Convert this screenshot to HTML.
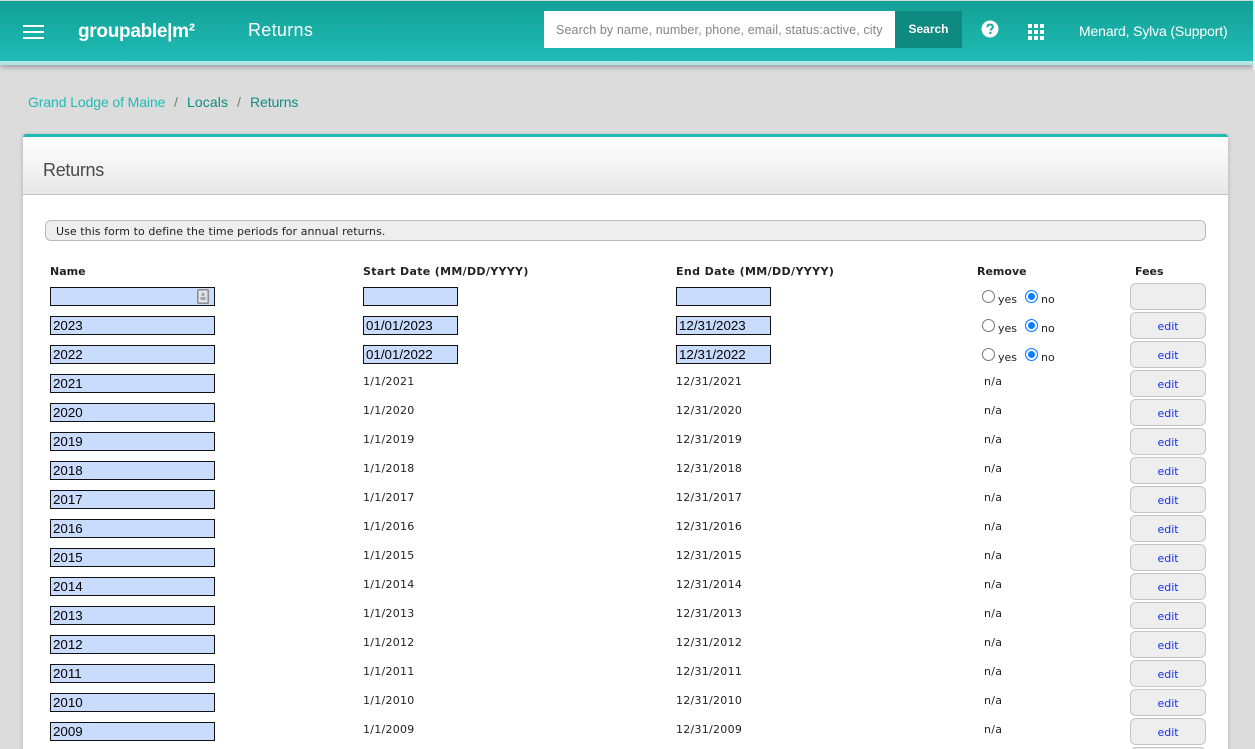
<!DOCTYPE html>
<html lang="en">
<head>
<meta charset="utf-8">
<title>Returns</title>
<style>
html,body{margin:0;padding:0;width:1255px;height:749px;overflow:hidden;background:#dcdcdc}
*{box-sizing:border-box}
body{position:relative;font-family:"DejaVu Sans",Verdana,sans-serif;font-size:11px;color:#222}
.a{position:absolute;white-space:nowrap}
.r{font-family:"Liberation Sans",Arial,sans-serif}
#top{left:0;top:0;width:1253px;height:65px;background:linear-gradient(#13a096,#1fbcb5);border-top:1px solid #cfdcdb;border-bottom:4px solid #b3e5e6;box-shadow:0 2px 5px rgba(0,0,0,.3)}
#edge{left:1253px;top:0;width:2px;height:70px;background:#efefef}
.bar{left:23px;width:21px;height:2px;background:#fff}
#card{left:23px;top:134px;width:1205px;height:640px;background:#fff;border-top:3px solid #1fbab4;border-radius:3px 3px 0 0;box-shadow:0 1px 5px rgba(0,0,0,.2)}
#head{left:23px;top:137px;width:1205px;height:58px;background:linear-gradient(#fff,#e7e7e7);border-bottom:1px solid #c4c4c4}
#note{left:45px;top:220px;width:1161px;height:21px;background:#eee;border:1px solid #bbb;border-radius:6px;padding:1px 0 0 10px;line-height:20px;letter-spacing:.06px}
.h{top:265px;font-weight:bold;font-size:11px;line-height:14px;color:#222}
.row{position:absolute;left:0;width:1255px;height:29px}
.i{position:absolute;top:4px;height:19px;background:#c9dcfd;border:1px solid #111;font:13.33px/17px "Liberation Sans",Arial,sans-serif;color:#000;padding-left:2px;overflow:hidden}
.n{left:50px;width:165px}
.s{left:363px;width:95px}
.e{left:676px;width:95px}
.d{position:absolute;top:5px;line-height:14px;font-size:11px;color:#222;letter-spacing:.27px}
.b{position:absolute;left:1130px;top:0;width:76px;height:27px;background:#eee;border:1px solid #c4c4c4;border-radius:6px;text-align:center;color:#1432e6;line-height:27px;font-size:11px}
.ro{position:absolute;width:13px;height:13px;top:7px;border:1px solid #777;border-radius:50%;background:#fff}
.ro.on{border:1px solid #0a7cff;background:#0a7cff;box-shadow:inset 0 0 0 2px #fff}
.lb{position:absolute;top:10px;line-height:14px}
</style>
</head>
<body>
<div class="a" id="top"></div>
<div class="a" id="edge"></div>
<div class="a bar" style="top:25px"></div>
<div class="a bar" style="top:31px"></div>
<div class="a bar" style="top:37px"></div>
<div class="a r" style="left:78px;top:20px;font-size:19px;line-height:24px;font-weight:bold;color:#fff;letter-spacing:-.3px">groupable|m²</div>
<div class="a r" style="left:248px;top:18px;font-size:18px;line-height:24px;color:#fff;letter-spacing:.3px">Returns</div>
<div class="a" style="left:544px;top:11px;width:351px;height:37px;background:#fff"></div>
<div class="a r" style="left:556px;top:23px;font-size:12.5px;line-height:15px;color:#858585;letter-spacing:.11px">Search by name, number, phone, email, status:active, city</div>
<div class="a r" style="left:895px;top:11px;width:67px;height:37px;background:#0e8a80;color:#fff;font-size:12px;font-weight:bold;line-height:36px;text-align:center">Search</div>
<svg class="a" style="left:981px;top:20px" width="18" height="18" viewBox="0 0 18 18"><circle cx="9" cy="9" r="8.5" fill="#fff"/><path d="M6.3 7.2C6.3 5.5 7.5 4.5 9.1 4.5c1.6 0 2.7 1 2.7 2.4 0 1.9-2.1 2-2.1 3.6" fill="none" stroke="#17a89f" stroke-width="2"/><rect x="8.3" y="11.8" width="2.2" height="2.2" fill="#17a89f"/></svg>
<svg class="a" style="left:1028px;top:24px" width="16" height="16" viewBox="0 0 16 16" fill="#fff"><rect x="0" y="0" width="4" height="4"/><rect x="6" y="0" width="4" height="4"/><rect x="12" y="0" width="4" height="4"/><rect x="0" y="6" width="4" height="4"/><rect x="6" y="6" width="4" height="4"/><rect x="12" y="6" width="4" height="4"/><rect x="0" y="12" width="4" height="4"/><rect x="6" y="12" width="4" height="4"/><rect x="12" y="12" width="4" height="4"/></svg>
<div class="a r" style="left:1079px;top:22px;font-size:14px;line-height:18px;color:#fff;letter-spacing:-.14px">Menard, Sylva (Support)</div>

<div class="a r" style="left:28px;top:93px;font-size:14px;line-height:18px;color:#1fbdb5;letter-spacing:-.1px">Grand Lodge of Maine</div>
<div class="a r" style="left:174px;top:93px;font-size:14px;line-height:18px;color:#777">/</div>
<div class="a r" style="left:187px;top:93px;font-size:14px;line-height:18px;color:#0f8c83;letter-spacing:.1px">Locals</div>
<div class="a r" style="left:237px;top:93px;font-size:14px;line-height:18px;color:#777">/</div>
<div class="a r" style="left:250px;top:93px;font-size:14px;line-height:18px;color:#0f8c83;letter-spacing:-.1px">Returns</div>

<div class="a" id="card"></div>
<div class="a" id="head"></div>
<div class="a r" style="left:43px;top:159px;font-size:18px;line-height:22px;color:#4a4a4a;letter-spacing:-.3px">Returns</div>
<div class="a" id="note">Use this form to define the time periods for annual returns.</div>

<div class="a h" style="left:50px">Name</div>
<div class="a h" style="left:363px;letter-spacing:.32px">Start Date (MM/DD/YYYY)</div>
<div class="a h" style="left:676px;letter-spacing:.38px">End Date (MM/DD/YYYY)</div>
<div class="a h" style="left:977px">Remove</div>
<div class="a h" style="left:1135px">Fees</div>

<div class="row" style="top:283px"><div class="i n"></div><svg style="position:absolute;left:197px;top:6px" width="12" height="15" viewBox="0 0 12 15"><rect x=".75" y=".75" width="10.5" height="13.5" rx="1" fill="#dfe3ea" stroke="#8d8d8d" stroke-width="1.5"/><path d="M6 3.5l2 3H4z" fill="#8d8d8d"/><rect x="3.5" y="8" width="5" height="3" fill="#a5a5a5"/></svg><div class="i s"></div><div class="i e"></div><span class="ro" style="left:982px"></span><span class="lb" style="left:998px">yes</span><span class="ro on" style="left:1025px"></span><span class="lb" style="left:1041px">no</span><div class="b"></div></div>
<div class="row" style="top:312px"><div class="i n">2023</div><div class="i s">01/01/2023</div><div class="i e">12/31/2023</div><span class="ro" style="left:982px"></span><span class="lb" style="left:998px">yes</span><span class="ro on" style="left:1025px"></span><span class="lb" style="left:1041px">no</span><div class="b">edit</div></div>
<div class="row" style="top:341px"><div class="i n">2022</div><div class="i s">01/01/2022</div><div class="i e">12/31/2022</div><span class="ro" style="left:982px"></span><span class="lb" style="left:998px">yes</span><span class="ro on" style="left:1025px"></span><span class="lb" style="left:1041px">no</span><div class="b">edit</div></div>
<div class="row" style="top:370px"><div class="i n">2021</div><span class="d" style="left:363px">1/1/2021</span><span class="d" style="left:676px">12/31/2021</span><span class="d" style="left:984px">n/a</span><div class="b">edit</div></div>
<div class="row" style="top:399px"><div class="i n">2020</div><span class="d" style="left:363px">1/1/2020</span><span class="d" style="left:676px">12/31/2020</span><span class="d" style="left:984px">n/a</span><div class="b">edit</div></div>
<div class="row" style="top:428px"><div class="i n">2019</div><span class="d" style="left:363px">1/1/2019</span><span class="d" style="left:676px">12/31/2019</span><span class="d" style="left:984px">n/a</span><div class="b">edit</div></div>
<div class="row" style="top:457px"><div class="i n">2018</div><span class="d" style="left:363px">1/1/2018</span><span class="d" style="left:676px">12/31/2018</span><span class="d" style="left:984px">n/a</span><div class="b">edit</div></div>
<div class="row" style="top:486px"><div class="i n">2017</div><span class="d" style="left:363px">1/1/2017</span><span class="d" style="left:676px">12/31/2017</span><span class="d" style="left:984px">n/a</span><div class="b">edit</div></div>
<div class="row" style="top:515px"><div class="i n">2016</div><span class="d" style="left:363px">1/1/2016</span><span class="d" style="left:676px">12/31/2016</span><span class="d" style="left:984px">n/a</span><div class="b">edit</div></div>
<div class="row" style="top:544px"><div class="i n">2015</div><span class="d" style="left:363px">1/1/2015</span><span class="d" style="left:676px">12/31/2015</span><span class="d" style="left:984px">n/a</span><div class="b">edit</div></div>
<div class="row" style="top:573px"><div class="i n">2014</div><span class="d" style="left:363px">1/1/2014</span><span class="d" style="left:676px">12/31/2014</span><span class="d" style="left:984px">n/a</span><div class="b">edit</div></div>
<div class="row" style="top:602px"><div class="i n">2013</div><span class="d" style="left:363px">1/1/2013</span><span class="d" style="left:676px">12/31/2013</span><span class="d" style="left:984px">n/a</span><div class="b">edit</div></div>
<div class="row" style="top:631px"><div class="i n">2012</div><span class="d" style="left:363px">1/1/2012</span><span class="d" style="left:676px">12/31/2012</span><span class="d" style="left:984px">n/a</span><div class="b">edit</div></div>
<div class="row" style="top:660px"><div class="i n">2011</div><span class="d" style="left:363px">1/1/2011</span><span class="d" style="left:676px">12/31/2011</span><span class="d" style="left:984px">n/a</span><div class="b">edit</div></div>
<div class="row" style="top:689px"><div class="i n">2010</div><span class="d" style="left:363px">1/1/2010</span><span class="d" style="left:676px">12/31/2010</span><span class="d" style="left:984px">n/a</span><div class="b">edit</div></div>
<div class="row" style="top:718px"><div class="i n">2009</div><span class="d" style="left:363px">1/1/2009</span><span class="d" style="left:676px">12/31/2009</span><span class="d" style="left:984px">n/a</span><div class="b">edit</div></div>
<div class="row" style="top:747px"><div class="b"></div></div>
</body>
</html>
